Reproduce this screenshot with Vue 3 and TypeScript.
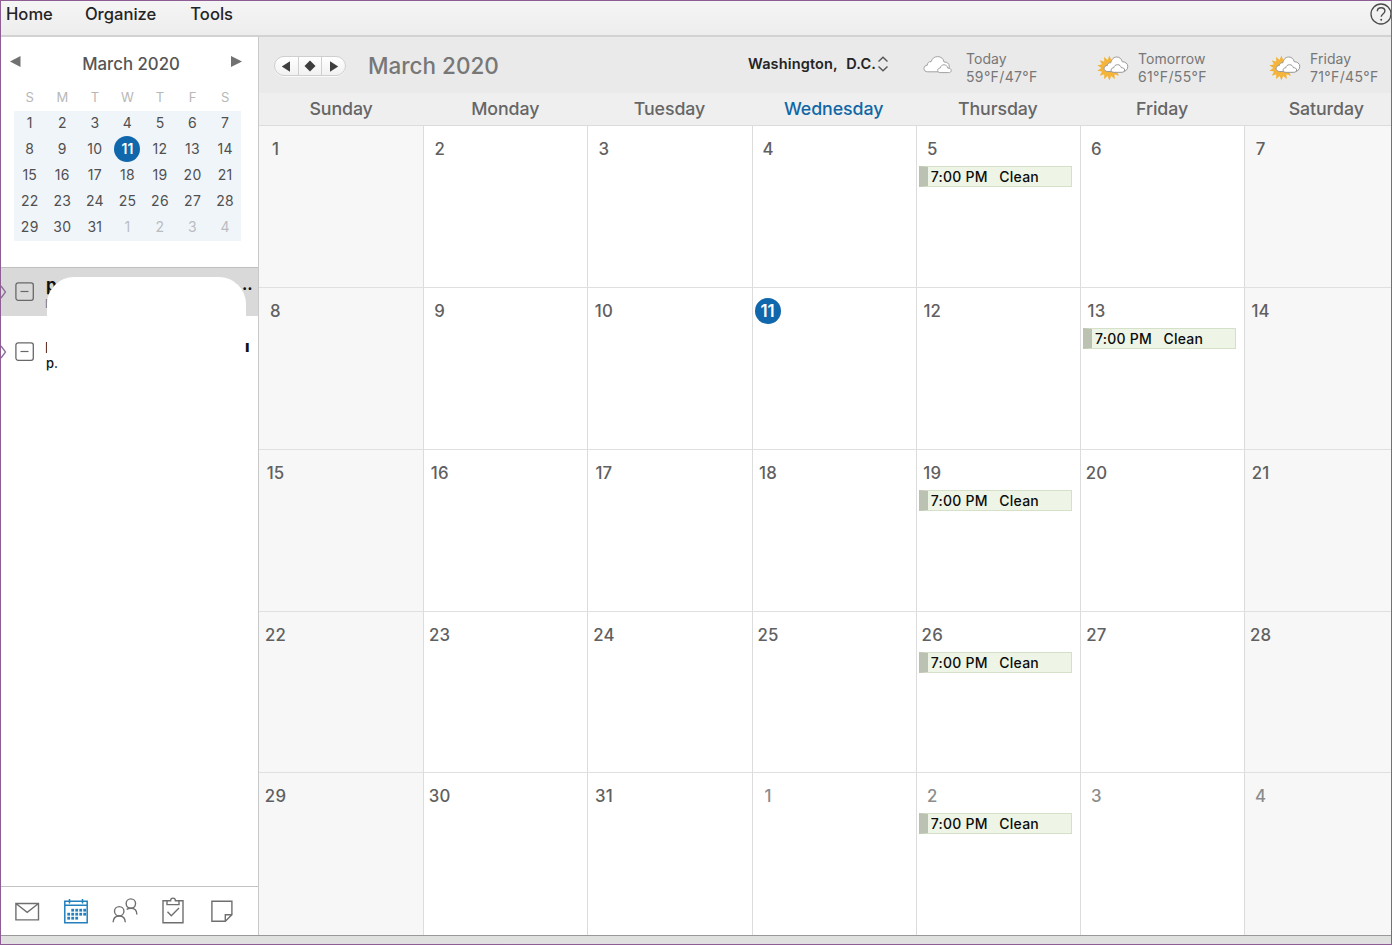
<script setup lang="ts">
interface MiniDay { day: number; other: boolean; today: boolean }
interface Cell extends MiniDay { weekend: boolean; event: boolean }

const menus: string[] = ['Home', 'Organize', 'Tools']
const weekdays: string[] = ['Sunday', 'Monday', 'Tuesday', 'Wednesday', 'Thursday', 'Friday', 'Saturday']
const cleanCells: number[] = [4, 12, 18, 25, 32]
const cells: Cell[] = Array.from({ length: 35 }, (_, i) => ({
  day: i < 31 ? i + 1 : i - 30,
  other: i >= 31,
  today: i === 10,
  weekend: i % 7 === 0 || i % 7 === 6,
  event: cleanCells.includes(i),
}))
const forecast = [
  { name: 'Today', temps: '59°F/47°F', sunny: false },
  { name: 'Tomorrow', temps: '61°F/55°F', sunny: true },
  { name: 'Friday', temps: '71°F/45°F', sunny: true },
]
const rays: number[] = Array.from({ length: 14 }, (_, i) => (i * 360) / 14)
const dots: number[][] = [
  [8, 12], [12, 12], [16, 12], [20, 12],
  [4, 16], [8, 16], [12, 16], [16, 16], [20, 16],
  [4, 20], [8, 20], [12, 20],
]
</script>

<template>
  <div class="window">
    <header class="menubar">
      <nav>
        <span v-for="m in menus" :key="m" class="menu" :class="m.toLowerCase()">{{ m }}</span>
      </nav>
      <svg class="help" width="22" height="22" viewBox="0 0 22 22">
        <circle cx="11" cy="11" r="10" fill="none" stroke="#4c4c4c" stroke-width="1.3" />
        <path d="M7.3 8.2C7.4 5.9 8.9 4.7 11.1 4.7s3.8 1.3 3.8 3.3c0 2.9-3.7 3-3.7 5.7" fill="none" stroke="#4c4c4c" stroke-width="1.4" />
        <circle cx="11.2" cy="16.7" r="1" fill="#4c4c4c" />
      </svg>
    </header>

    <div class="content">
      <aside class="sidebar">
        <section class="mini">
          <div class="mini-head">
            <svg width="11" height="11" viewBox="0 0 11 11"><path d="M10.500 0v11L0 5.500z" fill="#717171" /></svg>
            <span class="mini-title">March 2020</span>
            <svg width="11" height="11" viewBox="0 0 11 11"><path d="M0 0v11L11 5.500z" fill="#717171" /></svg>
          </div>
          <div class="mini-grid mini-week">
            <span v-for="(w, i) in weekdays" :key="i">{{ w.charAt(0) }}</span>
          </div>
          <div class="mini-grid mini-days">
            <span v-for="(c, i) in cells" :key="i" :class="{ other: c.other, today: c.today }"><b>{{ c.day }}</b></span>
          </div>
        </section>

        <section class="accounts">
          <div v-for="n in 2" :key="n" class="account" :class="{ selected: n === 1 }">
            <svg class="chevron" width="6" height="16" viewBox="0 0 6 16"><path d="M0 2L4.500 8L0 14" fill="none" stroke="#8c6c98" stroke-width="1.3" /></svg>
            <svg class="collapse" width="19" height="19" viewBox="0 0 19 19">
              <rect x=".9" y=".9" width="17.400" height="17.400" rx="2.200" fill="none" stroke="#686868" stroke-width="1.3" />
              <path d="M5.500 9.500h8" stroke="#686868" stroke-width="1.2" />
            </svg>
            <template v-if="n === 1">
              <span class="piece name">p</span>
              <span class="piece sub">l</span>
              <span class="piece more">..</span>
            </template>
            <template v-else>
              <span class="piece name2">l</span>
              <span class="piece sub2">p.</span>
              <span class="piece tail">ı</span>
            </template>
          </div>
          <div class="blank"></div>
        </section>

        <footer class="switcher">
          <svg width="24" height="28" viewBox="0 0 24 28" fill="none" stroke="#6f6f6f" stroke-width="1.400">
            <path d="M.9 6.500h22.600v16.400H.9zM.9 6.500L12.200 15.300L23.500 6.500" />
          </svg>
          <svg width="24" height="28" viewBox="0 0 24 28" fill="none" stroke="#2380bd" stroke-width="1.500">
            <path d="M.8 4.200h22.400v21.600H.8zM.8 8.300h22.400M5.500 2v4.500M18.500 2v4.500" />
            <rect v-for="(d, i) in dots" :key="i" :x="d[0] - .7" :y="d[1] - .2" width="2.800" height="2.800" fill="#2380bd" stroke="none" />
          </svg>
          <svg width="25" height="28" viewBox="0 0 26 28" fill="none" stroke="#6f6f6f" stroke-width="1.450">
            <circle cx="7.500" cy="14.300" r="4.900" />
            <path d="M1.200 25.800c.1-4.300 2.500-6.600 6.300-6.600s6.200 2.300 6.300 6.600" />
            <circle cx="19.600" cy="6.300" r="4.900" />
            <path d="M15.200 12.500c1.200-.9 2.700-1.300 4.400-1.300 3.800 0 6.200 2.300 6.300 6.400" />
          </svg>
          <svg width="22" height="28" viewBox="0 0 22 28" fill="none" stroke="#6f6f6f" stroke-width="1.400">
            <path d="M5 3.800H1v22h20v-22h-4" />
            <path d="M5 7.600V3.800h3.600C8.600 2.100 9.500 1.100 11 1.100S13.400 2.100 13.400 3.800H17v3.800z" />
            <path d="M5.500 14.800l3.800 4L17 11" />
          </svg>
          <svg width="22" height="28" viewBox="0 0 22 28" fill="none" stroke="#6f6f6f" stroke-width="1.400">
            <path d="M.9 4.200h20v13.500l-6.600 6.600H.9zM14.300 24.300v-6.600h6.600" />
          </svg>
        </footer>
      </aside>

      <main class="calendar">
        <div class="toolbar">
          <div class="pager">
            <span><svg width="9" height="11" viewBox="0 0 9 11"><path d="M8 .3v10.400L-.2 5.500z" fill="#3d3d3d" /></svg></span>
            <span><svg width="12" height="12" viewBox="0 0 12 12"><path d="M6 .5L11.500 6L6 11.500L.5 6z" fill="#3d3d3d" /></svg></span>
            <span><svg width="9" height="11" viewBox="0 0 9 11"><path d="M1 .3v10.400L9.200 5.500z" fill="#3d3d3d" /></svg></span>
          </div>
          <h1>March 2020</h1>
          <div class="place">
            <span class="city">Washington,</span><span class="state">D.C.</span>
            <svg width="12" height="16" viewBox="0 0 12 16" fill="none" stroke="#555" stroke-width="1.400"><path d="M1.500 5.500L6 1.300L10.500 5.500M1.500 10.500L6 14.700L10.500 10.500" /></svg>
          </div>
          <div v-for="f in forecast" :key="f.name" class="forecast">
            <svg v-if="!f.sunny" class="wx" width="32" height="26" viewBox="0 0 32 26">
              <g transform="translate(.7 .3)">
                <path d="M5 19.500C2.600 19.500 1.300 18.100 1.300 16.200c0-2 1.400-3.200 3.300-3.300C4.600 10.500 6.400 9 8.500 9.300 9.500 5.900 12 4.300 15 4.300c3.500 0 5.900 2.300 6.300 5.400 2.800-.4 5.300 1.500 5.300 4.400 0 3-1.700 5.400-4.800 5.400z" fill="#fff" stroke="#a2a2a2" />
                <path d="M17.500 20.300c-1.600 0-2.500-.9-2.500-2.200 0-1.500 1-2.300 2.400-2.300.7-2.200 2-3.300 3.900-3.300 2.200 0 3.500 1.400 3.800 3.300 2 .1 3.400.8 3.400 2.300s-1 2.200-2.600 2.200z" fill="#fff" stroke="#a2a2a2" />
              </g>
            </svg>
            <svg v-else class="wx" width="32" height="26" viewBox="0 0 32 26">
              <g transform="translate(2.400 3)">
                <path v-for="r in rays" :key="r" d="M10.700 6.500L13 .6L15.300 6.500z" fill="#f1b136" :transform="`rotate(${r} 13 13)`" />
                <circle cx="13" cy="13" r="8.500" fill="#f5b43a" />
                <path d="M11.500 16.500c-2.300 0-3.800-1.200-3.800-3 0-1.900 1.400-3 3.200-3 .2-2 1.700-3 3.400-2.600C15.400 3.900 17.500 2 20.200 2c3.100 0 5 1.900 5.600 4.700 3 0 5.600 1.900 5.600 4.600 0 3.300-2.400 5.500-5.700 5.500z" fill="#fff" stroke="#999" />
                <path d="M17.500 17.300c-1.800 0-2.800-.8-2.800-2.200s1-2.300 2.500-2.200c.6-2.100 2-3.200 3.900-3.200 2.100 0 3.400 1.200 3.800 3 2.100-.1 3.300.8 3.300 2.300s-1.200 2.300-2.900 2.300z" fill="#fff" stroke="#999" />
              </g>
            </svg>
            <div class="wx-text"><span class="wx-day">{{ f.name }}</span><span class="wx-temp">{{ f.temps }}</span></div>
          </div>
        </div>

        <div class="weekdays">
          <span v-for="(w, i) in weekdays" :key="w" :class="{ current: i === 3 }">{{ w }}</span>
        </div>

        <div class="month">
          <div v-for="(c, i) in cells" :key="i" class="cell" :class="{ weekend: c.weekend, other: c.other }">
            <span class="date" :class="{ today: c.today }"><b>{{ c.day }}</b></span>
            <div v-if="c.event" class="event"><span class="time">7:00 PM</span><span class="title">Clean</span></div>
          </div>
        </div>
      </main>
    </div>
    <div class="bottom"></div>
  </div>
</template>

<style>
body { margin: 0; overflow: hidden; }
</style>

<style scoped>
* { box-sizing: border-box; }
svg { display: block; flex: none; overflow: visible; }
.window { position: relative; width: 1392px; height: 945px; overflow: hidden; display: flex; flex-direction: column; background: #fff; font-family: Inter, "Liberation Sans", sans-serif; color: #555; white-space: nowrap; }
.window::after { content: ""; position: absolute; inset: 0; border: 1px solid #8e5d94; pointer-events: none; }

.menubar { height: 37px; flex: none; display: flex; justify-content: space-between; padding: 3px 0 0 6px; background: linear-gradient(#f5f5f5, #ededed); border-bottom: 2px solid #d2d2d2; }
.menu { display: inline-block; font-size: 16.600px; font-weight: 550; line-height: 22px; color: #242424; }
.organize { margin-left: 32px; }
.tools { margin-left: 34px; }
.help { margin-right: 0; }

.content { display: flex; height: 898px; flex: none; }
.sidebar { width: 259px; flex: none; display: flex; flex-direction: column; border-right: 1px solid #c9c9c9; }
.mini { height: 230px; flex: none; padding: 14px 16px 0 10px; }
.mini-head { display: flex; justify-content: space-between; height: 24px; padding-top: 5px; }
.mini-title { margin: -4px 0 0 10px; font-size: 16.800px; line-height: 24px; font-weight: 500; }
.mini-grid { display: grid; grid-template-columns: repeat(7, 32.570px); width: 228px; margin-left: 3.500px; text-align: center; }
.mini-week { height: 36px; font-size: 13px; line-height: 44px; color: #b7b7b7; }
.mini-days { width: 227px; background: #f0f5fa; grid-auto-rows: 26.100px; font-size: 14px; line-height: 24.500px; letter-spacing: .3px; color: #505050; }
.mini-days b { font-weight: 420; }
.mini-days .other { color: #b9bdc1; }
.mini-days .today { justify-self: center; width: 26px; height: 26px; margin-top: -1px; line-height: 26px; border-radius: 50%; background: #1067ac; color: #fff; letter-spacing: 0; }
.mini-days .today b { font-weight: 600; }

.accounts { position: relative; flex: 1; border-top: 1px solid #bfbfbf; color: #111; }
.account { position: relative; height: 48px; margin-bottom: 12px; display: flex; align-items: center; }
.selected { background: #d9d9d9; }
.chevron { margin-left: 1px; }
.collapse { margin: -2px 0 0 8px; }
.piece { position: absolute; left: 46px; }
.name { top: 7px; font-size: 17px; font-weight: 700; line-height: 20px; }
.sub { top: 30px; left: 45px; font-size: 12px; line-height: 12px; color: #777; }
.name2 { top: 13px; left: 45px; font-size: 14px; line-height: 14px; }
.more { top: 6px; left: 242px; font-size: 16px; font-weight: 700; line-height: 20px; }
.sub2 { top: 26px; z-index: 2; font-size: 13px; font-weight: 500; line-height: 18px; }
.tail { top: 9px; left: 245px; z-index: 2; font-size: 16px; font-weight: 800; line-height: 18px; }
.blank { position: absolute; left: 47px; top: 9px; width: 199px; height: 84px; border-radius: 27px 27px 0 0; background: #fff; }

.switcher { height: 49px; flex: none; border-top: 1px solid #c3c3c3; display: flex; align-items: center; gap: 24.500px; padding: 0 0 1px 15px; }
.switcher svg:last-child { margin-left: 2.500px; }

.calendar { width: 1133px; overflow: hidden; }
.toolbar { height: 56px; display: flex; background: #eaeaea; }
.pager { display: flex; flex: none; width: 72px; height: 20px; margin: 19px 22px 0 15px; border-radius: 10px; border: 1px solid #cfcfcf; background: linear-gradient(#fff, #f1f1f1); box-shadow: 0 1px 0 #fafafa; }
.pager span { flex: 1; display: grid; place-items: center; }
.pager span + span { border-left: 1px solid #d0d0d0; }
h1 { margin: 13px 0 0; width: 380px; flex: none; font-size: 22.500px; line-height: 32px; font-weight: 500; color: #777; }
.place { display: flex; flex: none; width: 176px; height: 20px; margin-top: 17px; font-size: 14.500px; line-height: 20px; font-weight: 630; letter-spacing: .15px; color: #242424; }
.state { margin-left: 8.500px; }
.place svg { margin: 2px 0 0 1px; }
.forecast { display: flex; width: 172px; flex: none; }
.wx { margin-top: 15px; margin-left: -2px; }
.wx-text { display: flex; flex-direction: column; margin: 13px 0 0 12px; font-size: 14px; line-height: 18px; letter-spacing: .05px; color: #777; }
.wx-temp { letter-spacing: .35px; }

.weekdays { display: grid; grid-template-columns: repeat(7, 164.200px); height: 33px; background: #efefef; border-bottom: 1px solid #dcdcdc; font-size: 17.800px; line-height: 31px; font-weight: 550; letter-spacing: -.1px; text-align: center; color: #666; }
.current { color: #1067a6; }
.month { display: grid; grid-template-columns: 165.200px repeat(6, 164.200px); grid-auto-rows: 161.850px; }
.cell { border-right: 1px solid #dcdcdc; border-bottom: 1px solid #e0e0e0; padding: 10px 8px 0 2px; }
.cell:nth-child(7n+1) { padding-left: 3px; }
.cell:nth-child(n+29) { border-bottom: 0; }
.weekend { background: #f7f7f7; }
.date { display: block; width: 27px; height: 26px; text-align: center; font-size: 16.800px; line-height: 27px; font-weight: 550; letter-spacing: .2px; color: #606060; }
.date b { font-weight: 550; }
.other .date { color: #8c8c8c; }
.date.today { width: 26px; line-height: 26px; letter-spacing: 0; border-radius: 50%; background: #1067ac; color: #fff; }
.date.today b { font-weight: 600; }
.event { display: flex; margin-top: 4px; height: 21px; border: 1px solid #d5e0c8; border-left: 9px solid #bcc2b1; background: #eef5e6; font-size: 14px; line-height: 19px; font-weight: 550; letter-spacing: .25px; color: #0c0c0c; }
.time { margin-left: 3px; width: 68.500px; }
.bottom { flex: 1; border-top: 1px solid #999; background: linear-gradient(#dfe1de 70%, #e8dcec); }
</style>
